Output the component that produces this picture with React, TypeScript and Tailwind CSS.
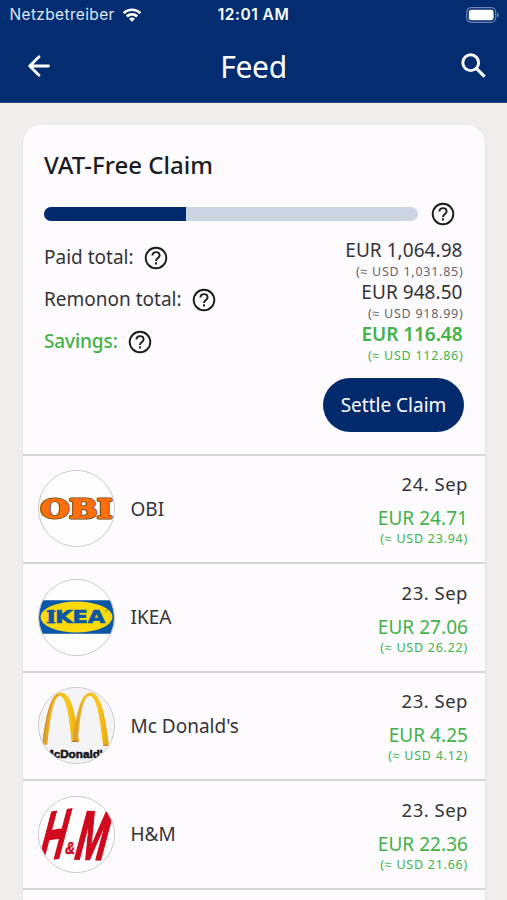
import React from 'react';

interface Total {
  label: string;
  eur: string;
  usd: string;
  highlight?: boolean;
}

interface Purchase {
  id: number;
  shop: string;
  date: string;
  eur: string;
  usd: string;
  logo: React.ReactNode;
}

const ObiLogo = () => (
  <svg viewBox="0 0 76 76" className="w-full h-full">
    <rect width="76" height="76" fill="#fefefe" />
    {/* dark outline comes from the thicker stroke underneath the fill */}
    <g fontFamily="'DejaVu Serif', serif" fontWeight="bold" fontSize="27" strokeLinejoin="round">
      <text x="1.500" y="47.500" textLength="73" lengthAdjust="spacingAndGlyphs" fill="#5f4a22" stroke="#5f4a22" strokeWidth="3" aria-hidden="true">
        OBI
      </text>
      <text x="1.500" y="47.500" textLength="73" lengthAdjust="spacingAndGlyphs" fill="#ff6f0c" stroke="#ff6f0c" strokeWidth="1.400">
        OBI
      </text>
    </g>
  </svg>
);

const IkeaLogo = () => (
  <svg viewBox="0 0 76 76" className="w-full h-full">
    <rect width="76" height="76" fill="#fefefe" />
    <rect y="20.5" width="76" height="34" fill="#0a57a5" />
    <ellipse cx="38" cy="37.5" rx="36.5" ry="15.7" fill="#fcd90b" />
    <text
      x="8"
      y="43.500"
      fontFamily="'DejaVu Sans', sans-serif"
      fontWeight="bold"
      fontSize="17"
      textLength="59"
      lengthAdjust="spacingAndGlyphs"
      fill="#0a57a5"
      stroke="#0a57a5"
      strokeWidth="0.700"
    >
      IKEA
    </text>
    {/* slab ends of the I */}
    <path d="M7.800 31.700h9M7.800 43.200h9" stroke="#0a57a5" strokeWidth="1.400" />
    <circle cx="68" cy="31.500" r="0.900" fill="none" stroke="#0a57a5" strokeWidth="0.400" />
  </svg>
);

const McDonaldsLogo = () => (
  <svg viewBox="0 0 76 76" className="w-full h-full">
    <defs>
      <linearGradient id="arch" x1="0" y1="0" x2="1" y2="0">
        <stop offset="0" stopColor="#dd9a26" />
        <stop offset="0.3" stopColor="#f2b92b" />
        <stop offset="0.7" stopColor="#fcc61a" />
        <stop offset="1" stopColor="#e3a512" />
      </linearGradient>
    </defs>
    <rect width="76" height="76" fill="#f4f3f6" />
    <path
      d="M33 54 C31 32 28 8 21 8 C15 8 11 32 8.500 57.500 L3.500 57.500 C6 30 12 4.500 21.500 4.500 C32 4.500 36 20 40.500 54 Z"
      fill="url(#arch)"
    />
    <path
      d="M35 54 C36.500 30 42 4.500 52 4.500 C63 4.500 67 28 71 58.500 L65 58.500 C62 34 59 8 51.500 8 C45 8 41.500 26 39.500 54 Z"
      fill="url(#arch)"
    />
    <path d="M4 56 C7 32 12 8 19.500 7" fill="none" stroke="#c98a2a" strokeWidth="1" />
    <path d="M33 54H40M65 58H71" fill="none" stroke="#b87818" strokeWidth="1.200" />
    <text x="38" y="70.500" textAnchor="middle" fontFamily="'Liberation Sans', sans-serif" fontWeight="bold" fontSize="11" textLength="66" lengthAdjust="spacingAndGlyphs" fill="#111" stroke="#111" strokeWidth="0.5">
      McDonald's
    </text>
  </svg>
);

const HmLogo = () => (
  <svg viewBox="0 0 76 76" className="w-full h-full" fill="#d0091e" stroke="#d0091e">
    <rect width="76" height="76" fill="#fefefe" stroke="none" />
    <g fontFamily="'Liberation Sans', sans-serif" fontWeight="bold" fontStyle="italic">
      <text transform="translate(-1 65) skewY(-9) skewX(-10) scale(0.51 1)" fontSize="69" strokeWidth="1.800">H</text>
      <text transform="translate(26.5 57.5) scale(0.85 1)" fontSize="16" strokeWidth="0.6">&amp;</text>
      <text transform="translate(35.500 62.500) skewY(2) skewX(-9) scale(0.54 1)" fontSize="70" strokeWidth="2">M</text>
    </g>
  </svg>
);

const HelpIcon = ({ className = '' }: { className?: string }) => (
  <svg viewBox="0 0 24 24" className={`w-6 h-6 shrink-0 text-[#1c1b1f] ${className}`} fill="none" stroke="currentColor" strokeWidth="1.900">
    <circle cx="12" cy="12" r="10.300" />
    <path d="M8.400 9.600C8.400 7.500 10 6.100 12 6.100s3.600 1.400 3.600 3.400c0 2.500-3.600 2.700-3.600 5.500" />
    <path d="M12 16.300v2.200" />
  </svg>
);

const totals: Total[] = [
  { label: 'Paid total:', eur: 'EUR 1,064.98', usd: '(≈ USD 1,031.85)' },
  { label: 'Remonon total:', eur: 'EUR 948.50', usd: '(≈ USD 918.99)' },
  { label: 'Savings:', eur: 'EUR 116.48', usd: '(≈ USD 112.86)', highlight: true },
];

const purchases: Purchase[] = [
  { id: 1, shop: 'OBI', date: '24. Sep', eur: 'EUR 24.71', usd: '(≈ USD 23.94)', logo: <ObiLogo /> },
  { id: 2, shop: 'IKEA', date: '23. Sep', eur: 'EUR 27.06', usd: '(≈ USD 26.22)', logo: <IkeaLogo /> },
  { id: 3, shop: "Mc Donald's", date: '23. Sep', eur: 'EUR 4.25', usd: '(≈ USD 4.12)', logo: <McDonaldsLogo /> },
  { id: 4, shop: 'H&M', date: '23. Sep', eur: 'EUR 22.36', usd: '(≈ USD 21.66)', logo: <HmLogo /> },
];

const StatusBar = () => (
  <div className="grid grid-cols-3 items-center h-[30px] px-[9.500px] font-['Inter',sans-serif] text-[15.5px]">
    <div className="flex items-center gap-[7px] text-[#dfe5f3] tracking-[0.35px]">
      Netzbetreiber
      <svg viewBox="0 0 20 15" className="w-5 h-[15px] shrink-0" fill="#fff">
        <path d="M10 3.100c2.700 0 5.200 1 7.100 2.800.2.100.4.100.5 0l1.400-1.400c.1-.2.100-.4 0-.5C16.600 1.700 13.400.4 10 .4S3.400 1.700 1 4c-.1.100-.1.300 0 .5l1.400 1.400c.1.100.3.100.5 0C4.800 4.100 7.300 3.100 10 3.100z" />
        <path d="M10 7.700c1.500 0 2.900.6 4 1.500.1.200.4.200.5 0l1.400-1.400c.2-.1.200-.4 0-.5C14.300 5.900 12.200 5 10 5s-4.300.9-5.900 2.300c-.2.100-.2.400 0 .5l1.400 1.400c.1.200.4.200.5 0 1.100-.9 2.500-1.500 4-1.500z" />
        <path d="M12.800 10.900c.1-.1.100-.3 0-.5C12 9.800 11 9.400 10 9.400s-2 .4-2.800 1c-.1.200-.1.400 0 .5l2.500 2.500c.2.200.4.200.6 0z" />
      </svg>
    </div>
    <div className="text-center text-white font-semibold tracking-[0.5px] whitespace-nowrap">12:01 AM</div>
    <svg viewBox="0 0 33 16" className="w-[33px] h-4 justify-self-end -mr-[1px]">
      <rect x="0.700" y="0.700" width="29" height="14.600" rx="4.500" fill="none" stroke="#6f82b2" strokeWidth="1.200" />
      <rect x="2.800" y="2.800" width="24.800" height="10.400" rx="2.600" fill="#fff" />
      <path d="M31 5.500c1 .4 1.700 1.400 1.700 2.500s-.7 2.100-1.700 2.500z" fill="#6f82b2" />
    </svg>
  </div>
);

const Header = () => (
  <header className="h-[103px] bg-[#032d70] border-b border-[#28407e] text-white">
    <StatusBar />
    <div className="flex items-center justify-between h-[72px] pl-[28px] pr-[20px]">
      <button className="w-[26px]">
        <svg viewBox="0 0 22 22" className="w-[22px] h-[22px]" fill="none" stroke="currentColor" strokeWidth="2.800" strokeLinecap="round" strokeLinejoin="round">
          <path d="M20.500 11H2M11 1.700L1.700 11l9.300 9.300" />
        </svg>
      </button>
      <h1 className="pt-[2px] -ml-[8px] text-[30px] leading-[40px] tracking-[-0.3px]">Feed</h1>
      <button>
        <svg viewBox="0 0 26 26" className="w-[26px] h-[26px]" fill="none" stroke="currentColor" strokeWidth="2.900">
          <circle cx="9.700" cy="9.700" r="7.900" />
          <path d="M15.300 15.300L23.600 23.600" strokeWidth="3.200" />
        </svg>
      </button>
    </div>
  </header>
);

const TotalRow = ({ label, eur, usd, highlight }: Total) => (
  <div className={`flex justify-between h-[42px] ${highlight ? 'text-[#43b249]' : 'text-[#343338]'}`}>
    <div className="flex items-center gap-[10px] h-[39px]">
      <span className={`text-[19px] ${highlight ? 'font-medium tracking-[-0.1px]' : ''}`}>{label}</span>
      <HelpIcon />
    </div>
    <div className="text-right">
      <div className={`text-[19px] leading-[25px] ${highlight ? 'font-semibold tracking-[-0.050px]' : 'tracking-[0.050px]'}`}>{eur}</div>
      <div className={`text-[12.5px] leading-[17px] tracking-[0.75px] -mr-[1px] ${highlight ? '' : 'text-[#66656a]'}`}>{usd}</div>
    </div>
  </div>
);

const PurchaseRow = ({ shop, date, eur, usd, logo }: Purchase) => (
  <li className="flex items-center h-[108.5px] border-t-2 border-[#d5d3d7] pl-[15px] pr-[16.500px]">
    <div className="w-[77px] h-[77px] rounded-full overflow-hidden border border-[#c2c0c4] shrink-0">{logo}</div>
    <div className="ml-[16px] text-[19px] text-[#343338]">{shop}</div>
    <div className="ml-auto pt-[2px] text-right">
      <div className="text-[18.500px] leading-[26px] text-[#343338] tracking-[0.5px]">{date}</div>
      <div className="mt-[9px] text-[19px] leading-[24px] text-[#43b249] tracking-[0.050px]">{eur}</div>
      <div className="text-[12.500px] leading-[18px] text-[#43b249] tracking-[0.75px]">{usd}</div>
    </div>
  </li>
);

export default function App() {
  return (
    <div className="h-[900px] w-[507px] overflow-hidden bg-[#efeeec] font-['Noto_Sans',sans-serif]">
      <Header />
      <main className="mt-[22px] mx-[22.500px] h-[900px] rounded-t-[18px] bg-[#fdfbfe] shadow-sm">
        <section className="h-[328.500px] pl-[21.500px] pr-[20.500px] pt-[22px]">
          <h2 className="text-[24px] leading-[36px] font-medium text-[#1c1b1f]">VAT-Free Claim</h2>
          <div className="flex items-center mt-[17px] h-[28px]">
            <div className="w-[374px] h-[14px] rounded-full overflow-hidden bg-[#cdd4e3]">
              <div className="h-full w-[142px] bg-[#022a6c]" />
            </div>
            <HelpIcon className="ml-[13px]" />
          </div>
          <div className="mt-[10px] pr-[1.500px]">
            {totals.map((total) => (
              <TotalRow key={total.label} {...total} />
            ))}
          </div>
          <div className="flex justify-end mt-[14px]">
            <button className="w-[141px] h-[54px] rounded-full bg-[#022a6c] text-[19px] text-white whitespace-nowrap">Settle Claim</button>
          </div>
        </section>
        <ul>
          {purchases.map((purchase) => (
            <PurchaseRow key={purchase.id} {...purchase} />
          ))}
          <li className="border-t-2 border-[#d5d3d7]" />
        </ul>
      </main>
    </div>
  );
}
